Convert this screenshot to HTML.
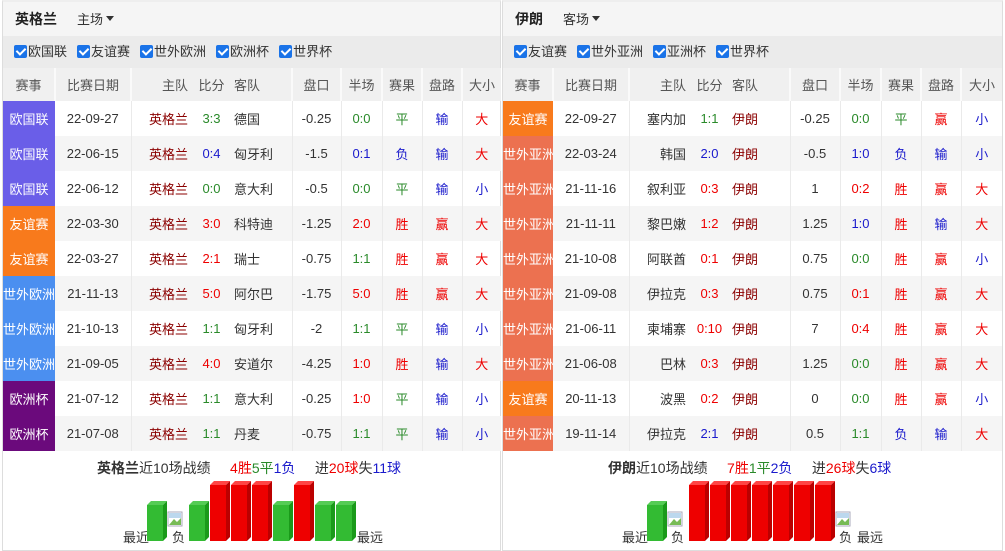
<!DOCTYPE html>
<html><head><meta charset="utf-8"><style>
*{margin:0;padding:0;box-sizing:border-box}
body{width:1005px;height:551px;background:#fff;font-family:"Liberation Sans","Noto Sans CJK SC",sans-serif;font-size:13px;color:#333;position:relative;overflow:hidden}
.p{position:absolute;top:0;height:551px;border:1px solid #ddd;border-top:2px solid #eee;background:#fff}
.t{height:34px;background:#f5f5f5;line-height:34px;padding-left:12px;font-size:14px}
.t b{font-weight:bold;color:#222;margin-right:20px}
.t i{font-style:normal;font-size:13px}
.t i:after{content:"";display:inline-block;border:4px solid transparent;border-top:5px solid #333;margin-left:3px;vertical-align:-1px}
.f{height:32px;background:#ebebeb;line-height:32px;padding-left:11px;font-size:13px;color:#333;white-space:nowrap}
.f span.it{margin-right:10px}
.cb{display:inline-block;width:13px;height:13px;background:#1a73e8;border-radius:2px;vertical-align:-2px;position:relative;margin-right:1px}
.cb:after{content:"";position:absolute;left:4px;top:1px;width:4px;height:7px;border:solid #fff;border-width:0 2px 2px 0;transform:rotate(45deg)}
table{border-collapse:collapse;table-layout:fixed;width:100%}
td,th{height:35px;text-align:center;font-weight:normal;white-space:nowrap;overflow:hidden}
th{height:33px;background:#f0f0f0;color:#555;border-right:2px solid #fafafa}
th.n{border-right:none}
td{border-right:1px solid #eaeaea}
td.n{border-right:none}
tr.g td{background:#f5f5f5}
td.l{color:#fff;border-right:none}
.r{text-align:right;padding-right:6px}
.lf{text-align:left;padding-left:5px}
.hm{color:#8b0000}
.R{color:#e00}.G{color:#2a8a2a}.B{color:#1a1acc}
tr td.ogl{background:#6a5ee8}tr td.yy{background:#f87a1c}tr td.swo{background:#4b8ff0}tr td.ozb{background:#6b0a7c}tr td.swy{background:#ec7150}
.s{position:absolute;top:458px;font-size:14px;white-space:nowrap}
.lb{position:absolute;font-size:13px;top:527px}
</style></head><body>

<div class="p" style="left:2px;width:499px">
<div class="t"><b>英格兰</b><i>主场</i></div>
<div class="f"><span class="it"><span class="cb"></span>欧国联</span><span class="it"><span class="cb"></span>友谊赛</span><span class="it"><span class="cb"></span>世外欧洲</span><span class="it"><span class="cb"></span>欧洲杯</span><span class="it"><span class="cb"></span>世界杯</span></div>
<table>
<colgroup><col style="width:52px"><col style="width:76px"><col style="width:63px"><col style="width:35px"><col style="width:63px"><col style="width:49px"><col style="width:41px"><col style="width:40px"><col style="width:40px"><col style="width:39px"></colgroup>
<tr><th>赛事</th><th>比赛日期</th><th class="r n">主队</th><th class="n">比分</th><th class="lf">客队</th><th>盘口</th><th>半场</th><th>赛果</th><th>盘路</th><th class="n">大小</th></tr>
<tr><td class="l ogl">欧国联</td><td>22-09-27</td><td class="r n hm">英格兰</td><td class="n G">3:3</td><td class="lf">德国</td><td>-0.25</td><td class="G">0:0</td><td class="G">平</td><td class="B">输</td><td class="n R">大</td></tr>
<tr class="g"><td class="l ogl">欧国联</td><td>22-06-15</td><td class="r n hm">英格兰</td><td class="n B">0:4</td><td class="lf">匈牙利</td><td>-1.5</td><td class="B">0:1</td><td class="B">负</td><td class="B">输</td><td class="n R">大</td></tr>
<tr><td class="l ogl">欧国联</td><td>22-06-12</td><td class="r n hm">英格兰</td><td class="n G">0:0</td><td class="lf">意大利</td><td>-0.5</td><td class="G">0:0</td><td class="G">平</td><td class="B">输</td><td class="n B">小</td></tr>
<tr class="g"><td class="l yy">友谊赛</td><td>22-03-30</td><td class="r n hm">英格兰</td><td class="n R">3:0</td><td class="lf">科特迪</td><td>-1.25</td><td class="R">2:0</td><td class="R">胜</td><td class="R">赢</td><td class="n R">大</td></tr>
<tr><td class="l yy">友谊赛</td><td>22-03-27</td><td class="r n hm">英格兰</td><td class="n R">2:1</td><td class="lf">瑞士</td><td>-0.75</td><td class="G">1:1</td><td class="R">胜</td><td class="R">赢</td><td class="n R">大</td></tr>
<tr class="g"><td class="l swo">世外欧洲</td><td>21-11-13</td><td class="r n hm">英格兰</td><td class="n R">5:0</td><td class="lf">阿尔巴</td><td>-1.75</td><td class="R">5:0</td><td class="R">胜</td><td class="R">赢</td><td class="n R">大</td></tr>
<tr><td class="l swo">世外欧洲</td><td>21-10-13</td><td class="r n hm">英格兰</td><td class="n G">1:1</td><td class="lf">匈牙利</td><td>-2</td><td class="G">1:1</td><td class="G">平</td><td class="B">输</td><td class="n B">小</td></tr>
<tr class="g"><td class="l swo">世外欧洲</td><td>21-09-05</td><td class="r n hm">英格兰</td><td class="n R">4:0</td><td class="lf">安道尔</td><td>-4.25</td><td class="R">1:0</td><td class="R">胜</td><td class="B">输</td><td class="n R">大</td></tr>
<tr><td class="l ozb">欧洲杯</td><td>21-07-12</td><td class="r n hm">英格兰</td><td class="n G">1:1</td><td class="lf">意大利</td><td>-0.25</td><td class="R">1:0</td><td class="G">平</td><td class="B">输</td><td class="n B">小</td></tr>
<tr class="g"><td class="l ozb">欧洲杯</td><td>21-07-08</td><td class="r n hm">英格兰</td><td class="n G">1:1</td><td class="lf">丹麦</td><td>-0.75</td><td class="G">1:1</td><td class="G">平</td><td class="B">输</td><td class="n B">小</td></tr>
</table>
</div>

<div class="p" style="left:502px;width:501px">
<div class="t"><b>伊朗</b><i>客场</i></div>
<div class="f"><span class="it"><span class="cb"></span>友谊赛</span><span class="it"><span class="cb"></span>世外亚洲</span><span class="it"><span class="cb"></span>亚洲杯</span><span class="it"><span class="cb"></span>世界杯</span></div>
<table>
<colgroup><col style="width:50px"><col style="width:76px"><col style="width:63px"><col style="width:35px"><col style="width:63px"><col style="width:50px"><col style="width:41px"><col style="width:40px"><col style="width:40px"><col style="width:41px"></colgroup>
<tr><th>赛事</th><th>比赛日期</th><th class="r n">主队</th><th class="n">比分</th><th class="lf">客队</th><th>盘口</th><th>半场</th><th>赛果</th><th>盘路</th><th class="n">大小</th></tr>
<tr><td class="l yy">友谊赛</td><td>22-09-27</td><td class="r n">塞内加</td><td class="n G">1:1</td><td class="lf hm">伊朗</td><td>-0.25</td><td class="G">0:0</td><td class="G">平</td><td class="R">赢</td><td class="n B">小</td></tr>
<tr class="g"><td class="l swy">世外亚洲</td><td>22-03-24</td><td class="r n">韩国</td><td class="n B">2:0</td><td class="lf hm">伊朗</td><td>-0.5</td><td class="B">1:0</td><td class="B">负</td><td class="B">输</td><td class="n B">小</td></tr>
<tr><td class="l swy">世外亚洲</td><td>21-11-16</td><td class="r n">叙利亚</td><td class="n R">0:3</td><td class="lf hm">伊朗</td><td>1</td><td class="R">0:2</td><td class="R">胜</td><td class="R">赢</td><td class="n R">大</td></tr>
<tr class="g"><td class="l swy">世外亚洲</td><td>21-11-11</td><td class="r n">黎巴嫩</td><td class="n R">1:2</td><td class="lf hm">伊朗</td><td>1.25</td><td class="B">1:0</td><td class="R">胜</td><td class="B">输</td><td class="n R">大</td></tr>
<tr><td class="l swy">世外亚洲</td><td>21-10-08</td><td class="r n">阿联酋</td><td class="n R">0:1</td><td class="lf hm">伊朗</td><td>0.75</td><td class="G">0:0</td><td class="R">胜</td><td class="R">赢</td><td class="n B">小</td></tr>
<tr class="g"><td class="l swy">世外亚洲</td><td>21-09-08</td><td class="r n">伊拉克</td><td class="n R">0:3</td><td class="lf hm">伊朗</td><td>0.75</td><td class="R">0:1</td><td class="R">胜</td><td class="R">赢</td><td class="n R">大</td></tr>
<tr><td class="l swy">世外亚洲</td><td>21-06-11</td><td class="r n">柬埔寨</td><td class="n R">0:10</td><td class="lf hm">伊朗</td><td>7</td><td class="R">0:4</td><td class="R">胜</td><td class="R">赢</td><td class="n R">大</td></tr>
<tr class="g"><td class="l swy">世外亚洲</td><td>21-06-08</td><td class="r n">巴林</td><td class="n R">0:3</td><td class="lf hm">伊朗</td><td>1.25</td><td class="G">0:0</td><td class="R">胜</td><td class="R">赢</td><td class="n R">大</td></tr>
<tr><td class="l yy">友谊赛</td><td>20-11-13</td><td class="r n">波黑</td><td class="n R">0:2</td><td class="lf hm">伊朗</td><td>0</td><td class="G">0:0</td><td class="R">胜</td><td class="R">赢</td><td class="n B">小</td></tr>
<tr class="g"><td class="l swy">世外亚洲</td><td>19-11-14</td><td class="r n">伊拉克</td><td class="n B">2:1</td><td class="lf hm">伊朗</td><td>0.5</td><td class="G">1:1</td><td class="B">负</td><td class="B">输</td><td class="n R">大</td></tr>
</table>
</div>

<div class="s" style="left:97px"><b>英格兰</b>近10场战绩&nbsp;&nbsp;&nbsp;&nbsp;&nbsp;<span class="R">4胜</span><span class="G">5平</span><span class="B">1负</span>&nbsp;&nbsp;&nbsp;&nbsp;&nbsp;进<span class="R">20球</span>失<span class="B">11球</span></div>
<div class="s" style="left:608px"><b>伊朗</b>近10场战绩&nbsp;&nbsp;&nbsp;&nbsp;&nbsp;<span class="R">7胜</span><span class="G">1平</span><span class="B">2负</span>&nbsp;&nbsp;&nbsp;&nbsp;&nbsp;进<span class="R">26球</span>失<span class="B">6球</span></div>

<div class="lb" style="left:123px">最近</div><div class="lb" style="left:172px">负</div><div class="lb" style="left:357px">最远</div>
<div class="lb" style="left:622px">最近</div><div class="lb" style="left:671px">负</div><div class="lb" style="left:839px">负</div><div class="lb" style="left:857px">最远</div>

<svg width="1005" height="551" style="position:absolute;left:0;top:0" xmlns="http://www.w3.org/2000/svg">
<defs>
<g id="gb"><polygon points="0,4 4,0 20,0 16,4" fill="#5c5"/><rect x="0" y="4" width="16" height="36" fill="#33bb33"/><polygon points="16,4 20,0 20,36 16,40" fill="#1a9a1a"/></g>
<g id="rb"><polygon points="0,4 4,0 20,0 16,4" fill="#f44"/><rect x="0" y="4" width="16" height="56" fill="#e00"/><polygon points="16,4 20,0 20,56 16,60" fill="#b00"/></g>
<g id="im"><rect x="0" y="0" width="14" height="14" fill="#fff" stroke="#aab" stroke-width="1"/><polygon points="1,13 6,7 9,10 13,6 13,13" fill="#7b5"/><rect x="1" y="1" width="12" height="5" fill="#bcd8ee"/></g>
</defs>
<use href="#gb" x="147" y="501"/><use href="#im" x="168" y="512"/><use href="#gb" x="189" y="501"/>
<use href="#rb" x="210" y="481"/><use href="#rb" x="231" y="481"/><use href="#rb" x="252" y="481"/>
<use href="#gb" x="273" y="501"/><use href="#rb" x="294" y="481"/><use href="#gb" x="315" y="501"/><use href="#gb" x="336" y="501"/>
<use href="#gb" x="647" y="501"/><use href="#im" x="668" y="512"/>
<use href="#rb" x="689" y="481"/><use href="#rb" x="710" y="481"/><use href="#rb" x="731" y="481"/><use href="#rb" x="752" y="481"/><use href="#rb" x="773" y="481"/><use href="#rb" x="794" y="481"/><use href="#rb" x="815" y="481"/>
<use href="#im" x="836" y="512"/>
</svg>
</body></html>
